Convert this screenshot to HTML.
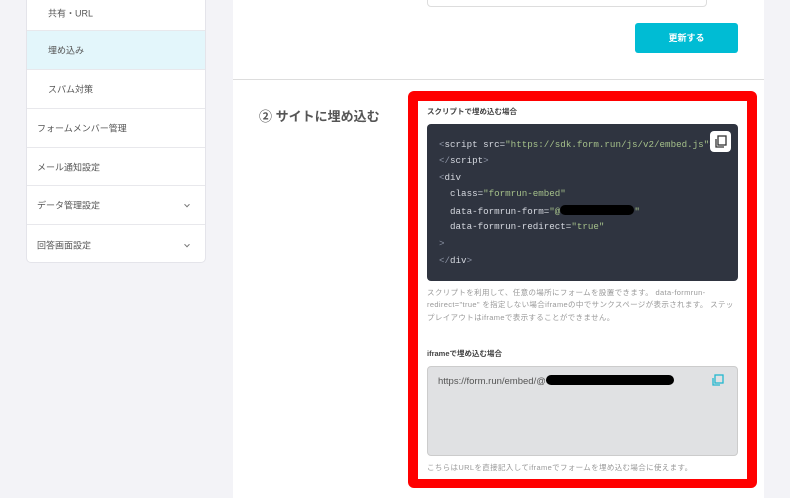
<!DOCTYPE html>
<html><head><meta charset="utf-8"><style>
*{margin:0;padding:0;box-sizing:border-box}
body{width:790px;height:498px;background:#f3f3f7;position:relative;overflow:hidden;font-family:"Liberation Sans","Noto Sans CJK JP",sans-serif;color:#444}
.side{position:absolute;left:26px;top:-5px;width:180px;height:268px;background:#fff;border:1px solid #e4e4ea;border-radius:0 0 5px 5px}
.it{position:absolute;left:0;width:178px;border-bottom:1px solid #e8e8ec;font-size:9px;color:#555}
.it span{position:absolute;top:50%;transform:translateY(-50%)}
.chev{position:absolute;right:16px;top:50%;transform:translateY(-60%) rotate(45deg);width:4px;height:4px;border-right:1px solid #777;border-bottom:1px solid #777}
.main{position:absolute;left:233px;top:0;width:531px;height:498px;background:#fff}
.abs{position:absolute}
.code{font-family:"Liberation Mono",monospace;font-size:9.2px;color:#d6d9e0;position:absolute;left:12px;white-space:pre}
.g{color:#a5c08a}
.p{color:#8b92a3}
.note{font-size:7.5px;letter-spacing:0.35px;color:#999}
</style></head><body>
<div class="side">
 <div class="it" style="top:0;height:35px"><span style="left:21px">共有・URL</span></div>
 <div class="it" style="top:35px;height:39px;background:#e3f6fb"><span style="left:21px">埋め込み</span></div>
 <div class="it" style="top:74px;height:39px"><span style="left:21px">スパム対策</span></div>
 <div class="it" style="top:113px;height:39px"><span style="left:10px">フォームメンバー管理</span></div>
 <div class="it" style="top:152px;height:38px"><span style="left:10px">メール通知設定</span></div>
 <div class="it" style="top:190px;height:39px"><span style="left:10px">データ管理設定</span><i class="chev"></i></div>
 <div class="it" style="top:229px;height:39px;border-bottom:none"><span style="left:10px">回答画面設定</span><i class="chev"></i></div>
</div>
<div class="main">
 <div class="abs" style="left:194px;top:-6px;width:280px;height:13px;border:1px solid #ddd;border-radius:4px"></div>
 <div class="abs" style="left:402px;top:23px;width:103px;height:30px;background:#00bcd4;border-radius:3px;color:#fff;font-size:9px;font-weight:bold;text-align:center;line-height:30px">更新する</div>
 <div class="abs" style="left:0;top:79px;width:531px;height:1px;background:#ddd"></div>
 <div class="abs" style="left:26px;top:106px;font-size:13px;font-weight:bold;color:#555">② サイトに埋め込む</div>
</div>
<div class="abs" style="left:408px;top:91px;width:349px;height:397px;background:#f00;border-radius:6px"></div>
<div class="abs" style="left:418px;top:101px;width:329px;height:378px;background:#fff"></div>
<div class="abs" style="left:427px;top:106px;font-size:7.5px;font-weight:bold;color:#444">スクリプトで埋め込む場合</div>
<div class="abs" style="left:427px;top:124px;width:311px;height:157px;background:#2f3440;border-radius:4px">
 <div class="code" style="top:15px"><span class="p">&lt;</span>script src=<span class="g">"https://sdk.form.run/js/v2/embed.js"</span><span class="p">&gt;</span></div>
 <div class="code" style="top:31px"><span class="p">&lt;/</span>script<span class="p">&gt;</span></div>
 <div class="code" style="top:48px"><span class="p">&lt;</span>div</div>
 <div class="code" style="top:64px">  class=<span class="g">"formrun-embed"</span></div>
 <div class="code" style="top:81px">  data-formrun-form=<span class="g">"@<span style="display:inline-block;width:74px;height:10px;background:#000;border-radius:5px;vertical-align:-1px"></span>"</span></div>
 <div class="code" style="top:97px">  data-formrun-redirect=<span class="g">"true"</span></div>
 <div class="code" style="top:114px"><span class="p">&gt;</span></div>
 <div class="code" style="top:131px"><span class="p">&lt;/</span>div<span class="p">&gt;</span></div>
 <div class="abs" style="left:283px;top:7px;width:21px;height:21px;background:#fff;border-radius:4px">
  <svg width="21" height="21" viewBox="0 0 21 21"><rect x="8" y="5" width="8" height="9" fill="none" stroke="#333" stroke-width="1.3"/><path d="M6 8v8h8" fill="none" stroke="#333" stroke-width="1.3"/></svg>
 </div>
</div>
<div class="abs note" style="left:427px;top:287px;width:312px;line-height:12.3px">スクリプトを利用して、任意の場所にフォームを設置できます。 data-formrun-<br>redirect="true" を指定しない場合iframeの中でサンクスページが表示されます。 ステッ<br>プレイアウトはiframeで表示することができません。</div>
<div class="abs" style="left:427px;top:348px;font-size:7.5px;font-weight:bold;color:#444">iframeで埋め込む場合</div>
<div class="abs" style="left:427px;top:366px;width:311px;height:90px;background:#e0e1e3;border:1px solid #ccc;border-radius:4px">
 <div class="abs" style="left:10px;top:8px;font-size:9.5px;color:#555">https://form.run/embed/@<span style="display:inline-block;width:128px;height:10px;background:#000;border-radius:5px;vertical-align:-1px"></span></div>
 <svg class="abs" style="left:283px;top:6px" width="14" height="14" viewBox="0 0 14 14"><rect x="4" y="2" width="8" height="8" fill="none" stroke="#22b8d0" stroke-width="1.3"/><path d="M2 5v7h7" fill="none" stroke="#22b8d0" stroke-width="1.3"/></svg>
</div>
<div class="abs note" style="left:427px;top:462px">こちらはURLを直接記入してiframeでフォームを埋め込む場合に使えます。</div>
</body></html>
